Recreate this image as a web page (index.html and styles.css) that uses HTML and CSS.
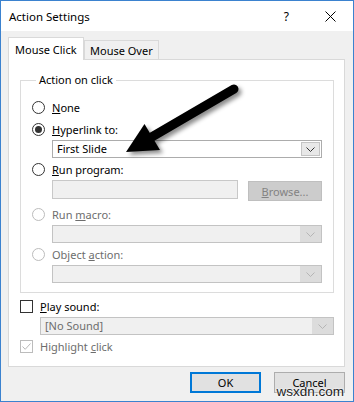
FILE: index.html
```html
<!DOCTYPE html>
<html>
<head>
<meta charset="utf-8">
<link rel="stylesheet" href="styles.css">
</head>
<body>
<div class="window">
  <div class="titlebar">
    <span class="title">Action Settings</span>
    <span class="help">?</span>
    <svg class="close" width="11" height="11" viewBox="0 0 11 11"><path d="M0.5 0.5 L10.5 10.5 M10.5 0.5 L0.5 10.5" stroke="#000" stroke-width="1" fill="none"/></svg>
  </div>
  <div class="content">
    <div class="tabs">
      <div class="tab active">Mouse Click</div>
      <div class="tab">Mouse Over</div>
    </div>
    <div class="panel">
      <div class="group">
        <div class="legend">Action on click</div>
        <div class="row first"><span class="radio"></span><span class="lbl"><u>N</u>one</span></div>
        <div class="row"><span class="radio checked"></span><span class="lbl"><u>H</u>yperlink to:</span></div>
        <div class="combo"><span class="combo-text">First Slide</span><span class="drop"><svg width="9" height="5" viewBox="0 0 9 5"><path d="M0.5 0.5 L4.5 4.5 L8.5 0.5" stroke="#333" fill="none"/></svg></span></div>
        <div class="row"><span class="radio"></span><span class="lbl"><u>R</u>un program:</span></div>
        <div class="inputrow"><span class="input"></span><span class="btn-browse"><u>B</u>rowse...</span></div>
        <div class="row macro"><span class="radio disabled"></span><span class="lbl dim">Run <u>m</u>acro:</span></div>
        <div class="combo disabled"><span class="combo-text"></span><span class="drop"><svg width="9" height="5" viewBox="0 0 9 5"><path d="M0.5 0.5 L4.5 4.5 L8.5 0.5" stroke="#b5b5b5" fill="none"/></svg></span></div>
        <div class="row"><span class="radio disabled"></span><span class="lbl dim">Object <u>a</u>ction:</span></div>
        <div class="combo disabled"><span class="combo-text"></span><span class="drop"><svg width="9" height="5" viewBox="0 0 9 5"><path d="M0.5 0.5 L4.5 4.5 L8.5 0.5" stroke="#b5b5b5" fill="none"/></svg></span></div>
      </div>
      <div class="row crow sound"><span class="check"></span><span class="lbl"><u>P</u>lay sound:</span></div>
      <div class="combo disabled wide"><span class="combo-text dim">[No Sound]</span><span class="drop"><svg width="9" height="5" viewBox="0 0 9 5"><path d="M0.5 0.5 L4.5 4.5 L8.5 0.5" stroke="#b5b5b5" fill="none"/></svg></span></div>
      <div class="row crow"><span class="check disabled"><svg width="11" height="11" viewBox="0 0 11 11"><path d="M1.5 5.5 L4.2 8.3 L9.5 2.5" stroke="#b8b8b8" stroke-width="1" fill="none"/></svg></span><span class="lbl dim">Highlight <u>c</u>lick</span></div>
    </div>
    <div class="buttons">
      <span class="btn default">OK</span>
      <span class="btn">Cancel</span>
    </div>
  </div>
  <svg class="arrow" width="354" height="402" viewBox="0 0 354 402">
    <defs>
      <filter id="shadow" x="-20%" y="-20%" width="150%" height="150%">
        <feDropShadow dx="3" dy="3" stdDeviation="2" flood-color="#000" flood-opacity="0.45"/>
      </filter>
    </defs>
    <g filter="url(#shadow)">
      <line x1="234" y1="89" x2="150" y2="138" stroke="#000" stroke-width="9" stroke-linecap="round"/>
      <polygon points="126,152 144.5,124 160,150" fill="#000"/>
    </g>
  </svg>
  <div class="watermark">wsxdn.com</div>
</div>
</body>
</html>
```
FILE: styles.css
```css
* { box-sizing: border-box; }
html, body { margin: 0; padding: 0; }
body {
  width: 354px;
  height: 402px;
  font-family: "Noto Sans", "Open Sans", sans-serif;
  font-size: 11px;
  color: #000;
}
.window {
  position: relative;
  width: 354px;
  height: 402px;
  border: 1px solid #3b82cf;
  background: #f0f0f0;
  overflow: hidden;
}
.titlebar {
  height: 30px;
  background: #fff;
  display: flex;
  align-items: center;
  padding: 0 17px 0 8px;
}
.title { font-size: 11.5px; flex: 1; }
.help { font-size: 12px; margin-right: 36px; }
.close { display: block; }
.content { padding: 6px 0 0 7px; }
.tabs {
  display: flex;
  align-items: flex-end;
  height: 22px;
}
.tab {
  height: 19px;
  border: 1px solid #d9d9d9;
  border-bottom: none;
  background: #f0f0f0;
  padding: 0 5px;
  display: flex;
  align-items: center;
  width: 75px;
  white-space: nowrap;
}
.tab.active {
  position: relative;
  z-index: 1;
  height: 23px;
  margin-bottom: -1px;
  background: #fff;
  width: 76px;
  padding-left: 6px;
}
.panel {
  width: 337px;
  height: 308px;
  background: #fff;
  border: 1px solid #d9d9d9;
  padding-top: 20px;
}
.group {
  margin-left: 11px;
  width: 314px;
  height: 213px;
  border: 1px solid #dcdcdc;
  padding: 0 10px 0 11px;
}
.legend {
  width: fit-content;
  margin: -9px 0 0 4px;
  padding: 0 3px;
  background: #fff;
  height: 16px;
  line-height: 16px;
  white-space: nowrap;
}
.row {
  display: flex;
  align-items: center;
  height: 22px;
  white-space: nowrap;
}
.row.first { margin-top: 8px; }
.row.macro { margin-top: 2px; }
.lbl { margin-left: 7px; }
.dim { color: #6d6d6d; }
.radio {
  width: 13px;
  height: 13px;
  border: 1px solid #333;
  border-radius: 50%;
  background: #fff;
  display: flex;
  align-items: center;
  justify-content: center;
  flex: none;
}
.radio.checked::after {
  content: "";
  width: 7px;
  height: 7px;
  border-radius: 50%;
  background: #333;
}
.radio.disabled { border-color: #bcbcbc; }
.combo {
  display: flex;
  margin-left: 20px;
  width: 270px;
  height: 18px;
  border: 1px solid #acacac;
  background: #fff;
}
.combo-text { flex: 1; padding-left: 4px; line-height: 16px; }
.drop {
  width: 19px;
  margin: 1px;
  border: 1px solid #c4c4c4;
  background: #e8e8e8;
  display: flex;
  align-items: center;
  justify-content: center;
}
.combo.disabled { border-color: #c3c3c3; background: #f0f0f0; }
.combo.disabled .drop { background: #dcdcdc; border-color: #dcdcdc; margin: 0; width: 21px; }
.inputrow {
  display: flex;
  align-items: flex-start;
  margin-left: 20px;
  height: 21px;
}
.input {
  width: 186px;
  height: 19px;
  border: 1px solid #c8c8c8;
  background: #f0f0f0;
}
.btn-browse {
  margin: 1px 0 0 10px;
  width: 74px;
  height: 20px;
  background: #cccccc;
  border: 1px solid #bfbfbf;
  color: #838383;
  display: flex;
  align-items: center;
  justify-content: center;
}
.crow { padding-left: 11px; }
.crow.sound { margin-top: 2px; }
.check {
  width: 13px;
  height: 13px;
  border: 1px solid #333;
  background: #fff;
  flex: none;
  display: flex;
}
.check.disabled { border-color: #bcbcbc; }
.combo.wide { margin-left: 31px; width: 294px; }
.buttons {
  display: flex;
  justify-content: flex-end;
  gap: 13px;
  width: 337px;
  margin-top: 5px;
}
.btn {
  width: 71px;
  height: 21px;
  background: #e1e1e1;
  border: 1px solid #adadad;
  display: flex;
  align-items: center;
  justify-content: center;
}
.btn.default { border: 2px solid #0078d7; }
.arrow {
  position: absolute;
  left: -1px;
  top: -1px;
  pointer-events: none;
}
.watermark {
  position: absolute;
  right: 9px;
  bottom: 2px;
  font-family: "Liberation Sans", sans-serif;
  font-size: 13.5px;
  color: #222;
  line-height: 14px;
  text-shadow: 0 0 2px #fff, 0 0 2px #fff;
}
```
